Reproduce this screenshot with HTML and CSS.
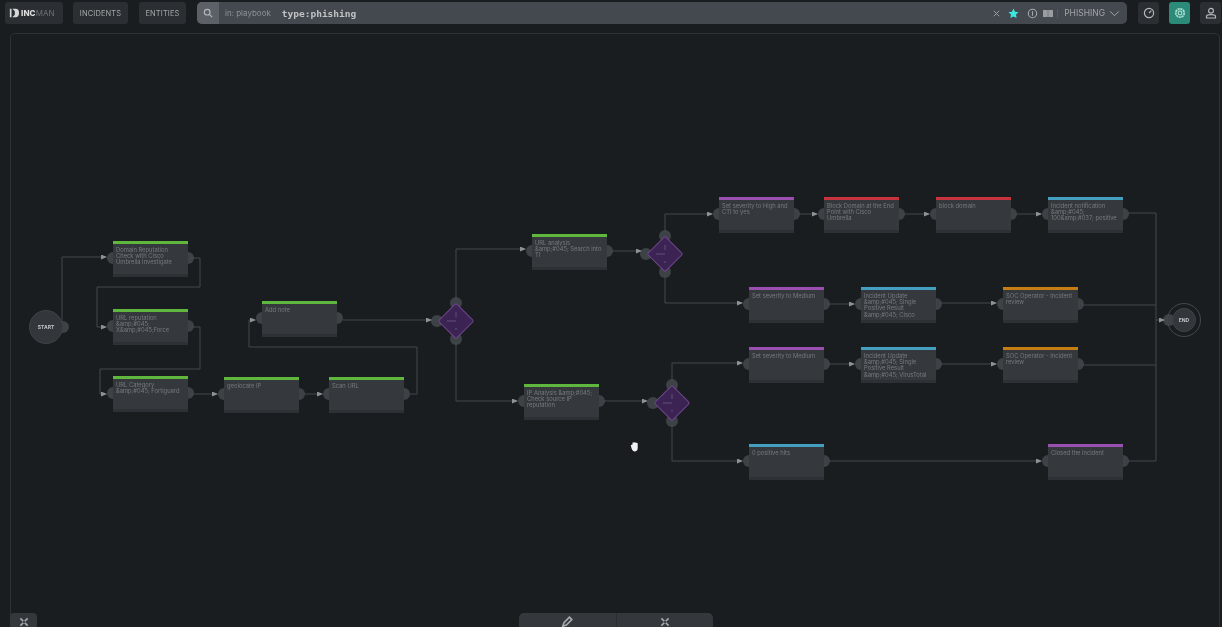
FILE: index.html
```html
<!DOCTYPE html>
<html lang="en">
<head>
<meta charset="utf-8">
<title>IncMan playbook</title>
<link rel="stylesheet" href="styles.css">
</head>
<body>
<header class="topbar">
  <div class="btn logo">
    <svg class="logo-mark" viewBox="0 0 12 12"><path d="M1 1h2v10H1zM4 1h4a4 5 0 0 1 0 10H4l3-3V4z"/></svg>
    <span class="logo-inc">INC</span><span class="logo-man">MAN</span>
  </div>
  <div class="btn nav-incidents">INCIDENTS</div>
  <div class="btn nav-entities">ENTITIES</div>
  <div class="search">
    <div class="search-icon"><svg viewBox="0 0 12 12"><circle cx="5" cy="5" r="3.4"/><path d="M7.6 7.6 11 11"/></svg></div>
    <span class="search-scope">in: playbook</span>
    <span class="search-query">type:phishing</span>
    <span class="spring"></span>
    <svg class="sicon close" viewBox="0 0 10 10"><path d="M2 2l6 6M8 2l-6 6"/></svg>
    <svg class="star" viewBox="0 0 12 12"><path d="M6 .6l1.700 3.500 3.800.5-2.800 2.600.7 3.800L6 9.200l-3.400 1.800.7-3.800L.5 4.600l3.800-.5z"/></svg>
    <svg class="sicon info" viewBox="0 0 10 10"><circle cx="5" cy="5" r="3.800"/><path d="M5 3v4"/></svg>
    <svg class="book" viewBox="0 0 10 9"><path d="M0 1h4.800v7H0zM5.200 1H10v7H5.200z"/></svg>
    <span class="sep"></span>
    <span class="search-type">PHISHING</span>
    <svg class="sicon chev" viewBox="0 0 12 8"><path d="M1 1.500l5 5 5-5"/></svg>
  </div>
  <div class="btn sq first"><svg class="round-ico" viewBox="0 0 12 12"><circle cx="6" cy="6" r="4.600"/><path d="M6 6l2.400-2.400"/></svg></div>
  <div class="btn sq green"><svg class="round-ico" viewBox="0 0 12 12"><circle cx="6" cy="6" r="4.200" stroke-dasharray="2.200 .6" stroke-width="1.800"/><circle cx="6" cy="6" r="1.800"/></svg></div>
  <div class="btn sq user"><svg class="round-ico" viewBox="0 0 12 12"><circle cx="6" cy="3.800" r="2.400"/><path d="M1.500 11V9.400c0-1.200 1.800-1.700 4.500-1.700s4.500.5 4.500 1.700V11z"/></svg></div>
</header>

<main class="canvas">
  <svg class="edges" viewBox="0 0 1222 627" width="1222" height="627">
    <defs>
      <marker id="arrow" markerWidth="6" markerHeight="5" refX="5" refY="2.500" orient="auto" markerUnits="userSpaceOnUse">
        <path class="arrowhead" d="M0 0L6 2.500L0 5z"/>
      </marker>
    </defs>
    <g class="edge">
      <path marker-end="url(#arrow)" d="M62 322V257H106"/>
      <path marker-end="url(#arrow)" d="M190 258H200V287H97V327H106"/>
      <path marker-end="url(#arrow)" d="M190 327H200V369H100V394H106"/>
      <path marker-end="url(#arrow)" d="M190 394H217"/>
      <path marker-end="url(#arrow)" d="M304 394H322"/>
      <path marker-end="url(#arrow)" d="M410 394H417V347H249V320H255"/>
      <path marker-end="url(#arrow)" d="M343 320H431"/>
      <path marker-end="url(#arrow)" d="M456 300V249H525"/>
      <path marker-end="url(#arrow)" d="M456 342V401H517"/>
      <path marker-end="url(#arrow)" d="M611 251H641"/>
      <path marker-end="url(#arrow)" d="M665 232V214H712"/>
      <path marker-end="url(#arrow)" d="M665 275V303H742"/>
      <path marker-end="url(#arrow)" d="M798 214H817"/>
      <path marker-end="url(#arrow)" d="M903 214H929"/>
      <path marker-end="url(#arrow)" d="M1015 214H1041"/>
      <path d="M1128 213H1156V461H1128"/>
      <path marker-end="url(#arrow)" d="M1156 320H1164"/>
      <path marker-end="url(#arrow)" d="M828 304H854"/>
      <path marker-end="url(#arrow)" d="M940 303H996"/>
      <path d="M1082 305H1156"/>
      <path marker-end="url(#arrow)" d="M828 364H854"/>
      <path marker-end="url(#arrow)" d="M940 364H996"/>
      <path d="M1082 365H1156"/>
      <path marker-end="url(#arrow)" d="M603 401H647"/>
      <path marker-end="url(#arrow)" d="M672 382V363H742"/>
      <path marker-end="url(#arrow)" d="M672 424V461H742"/>
      <path marker-end="url(#arrow)" d="M828 461H1041"/>
    </g>
  </svg>

  <div class="terminal start"><i class="port right"></i><b class="disc">START</b></div>
  <div class="terminal end"><i class="port left"></i><b class="disc">END</b></div>

  <div class="node green-top n1"><i class="port left"></i><i class="port right"></i><p>Domain Reputation Check with Cisco Umbrella Investigate</p></div>
  <div class="node green-top n2"><i class="port left"></i><i class="port right"></i><p>URL reputation &amp;amp;#045; X&amp;amp;#045;Force</p></div>
  <div class="node green-top n3"><i class="port left"></i><i class="port right"></i><p>URL Category &amp;amp;#045; Fortiguard</p></div>
  <div class="node green-top n4"><i class="port left"></i><i class="port right"></i><p>geoIocate IP</p></div>
  <div class="node green-top n5"><i class="port left"></i><i class="port right"></i><p>Scan URL</p></div>
  <div class="node green-top n6"><i class="port left"></i><i class="port right"></i><p>Add note</p></div>
  <div class="node green-top n7"><i class="port left"></i><i class="port right"></i><p>URL analysis &amp;amp;#045; Search into TI</p></div>
  <div class="node green-top n8"><i class="port left"></i><i class="port right"></i><p>IP Analysis &amp;amp;#045; Check source IP reputation</p></div>
  <div class="node purple-top n9"><i class="port left"></i><i class="port right"></i><p>Set severity to High and CTI to yes</p></div>
  <div class="node red-top n10"><i class="port left"></i><i class="port right"></i><p>Block Domain at the End Point with Cisco Umbrella</p></div>
  <div class="node red-top n11"><i class="port left"></i><i class="port right"></i><p>block domain</p></div>
  <div class="node blue-top n12"><i class="port left"></i><i class="port right"></i><p>Incident notification &amp;amp;#045; 100&amp;amp;#037; positive</p></div>
  <div class="node purple-top n13"><i class="port left"></i><i class="port right"></i><p>Set severity to Medium</p></div>
  <div class="node blue-top n14"><i class="port left"></i><i class="port right"></i><p>Incident Update &amp;amp;#045; Single Positive Result &amp;amp;#045; Cisco</p></div>
  <div class="node orange-top n15"><i class="port left"></i><i class="port right"></i><p>SOC Operator - Incident review</p></div>
  <div class="node purple-top n16"><i class="port left"></i><i class="port right"></i><p>Set severity to Medium</p></div>
  <div class="node blue-top n17"><i class="port left"></i><i class="port right"></i><p>Incident Update &amp;amp;#045; Single Positive Result &amp;amp;#045; VirusTotal</p></div>
  <div class="node orange-top n18"><i class="port left"></i><i class="port right"></i><p>SOC Operator - Incident review</p></div>
  <div class="node blue-top n19"><i class="port left"></i><i class="port right"></i><p>0 positive hits</p></div>
  <div class="node purple-top n20"><i class="port left"></i><i class="port right"></i><p>Closed the incident</p></div>

  <div class="gateway g1"><i class="port gleft"></i><i class="port gtop"></i><i class="port gbottom"></i><span class="diamond"></span><svg class="gmark" viewBox="0 0 38 38"><path d="M10 19H19M19 10V15M19 26V28"/></svg></div>
  <div class="gateway g2"><i class="port gleft"></i><i class="port gtop"></i><i class="port gbottom"></i><span class="diamond"></span><svg class="gmark" viewBox="0 0 38 38"><path d="M10 19H19M19 10V15M19 26V28"/></svg></div>
  <div class="gateway g3"><i class="port gleft"></i><i class="port gtop"></i><i class="port gbottom"></i><span class="diamond"></span><svg class="gmark" viewBox="0 0 38 38"><path d="M10 19H19M19 10V15M19 26V28"/></svg></div>

  <svg class="hand" viewBox="0 0 12 12"><path d="M2 5c0-1 1-1 1.400-.4L4 2c.2-.8 1.200-.7 1.300 0 .2-.9 1.300-.9 1.500 0 .3-.7 1.300-.5 1.300.3.400-.5 1.400-.3 1.400.6V8c0 2-1.200 3.500-3.500 3.500C4 11.500 3 9.500 2 5z"/></svg>

  <div class="tool tool-left"><svg viewBox="0 0 10 10"><path d="M2 2l2.400 2.400M8 2L5.600 4.400M2 8l2.400-2.400M8 8L5.600 5.600"/></svg></div>
  <div class="toolbar">
    <div class="tool-cell"><svg viewBox="0 0 10 10"><path d="M1.500 8.500l1-3L7 1l2 2-4.500 4.500z"/></svg></div>
    <div class="tool-cell"><svg viewBox="0 0 10 10"><path d="M2 2l2.400 2.400M8 2L5.600 4.400M2 8l2.400-2.400M8 8L5.600 5.600"/></svg></div>
  </div>
</main>
</body>
</html>
```
FILE: styles.css
```css
* { box-sizing: border-box; }
html, body { margin: 0; height: 100%; }
body {
  width: 1222px;
  height: 627px;
  overflow: hidden;
  background: #191d20;
  font-family: "Inter", "Liberation Sans", sans-serif;
  color: #8d9093;
  position: relative;
}

/* top bar */
.topbar {
  display: flex;
  align-items: center;
  height: 22px;
  margin-top: 2px;
  padding-left: 5px;
  filter: blur(.6px);
}
.btn {
  height: 22px;
  display: flex;
  align-items: center;
  justify-content: center;
  background: #2b2f33;
  border-radius: 3px;
  font-size: 7.500px;
  letter-spacing: .1px;
  color: #a4a7a9;
}
.logo { width: 58px; justify-content: flex-start; padding-left: 4px; }
.logo-mark { width: 10px; height: 10px; fill: #d5d7d8; margin-right: 2px; }
.logo-inc { font-weight: 800; font-size: 8px; color: #dcdedf; }
.logo-man { font-size: 8px; color: #6d7175; }
.nav-incidents { width: 55px; margin-left: 10px; }
.nav-entities { width: 47px; margin-left: 11px; }
.search {
  width: 930px;
  height: 22px;
  margin-left: 11px;
  display: flex;
  align-items: center;
  background: #44494f;
  border-radius: 5px;
  overflow: hidden;
}
.search-icon {
  width: 22px;
  height: 22px;
  background: #5b6167;
  display: flex;
  align-items: center;
  justify-content: center;
}
.search-icon svg { width: 10px; height: 10px; fill: none; stroke: #b5b8ba; stroke-width: 1.400; }
.search-scope { font-size: 8px; color: #8f9396; margin-left: 6px; }
.search-query {
  font-family: "DejaVu Sans Mono", "Liberation Mono", monospace;
  font-size: 9.500px;
  font-weight: 700;
  color: #c0c2c4;
  margin-left: 11px;
}
.spring { flex: 1; }
.sicon { fill: none; stroke: #a6a9ac; stroke-width: 1; }
.close { width: 9px; height: 9px; margin-right: 7px; }
.star { width: 11px; height: 11px; fill: #3be8e0; margin-right: 8px; }
.info { width: 11px; height: 11px; margin-right: 5px; }
.book { width: 10px; height: 9px; fill: #999da0; margin-right: 4px; }
.sep { width: 1px; height: 9px; background: #555a60; margin-right: 6px; }
.search-type { font-size: 8.500px; color: #a2a5a8; margin-right: 4px; }
.chev { width: 11px; height: 7px; margin-right: 7px; stroke-width: 1.100; }
.sq { width: 21px; }
.first { margin-left: 11px; }
.green { margin-left: 10px; background: #2b8a78; }
.user { margin-left: 10px; }
.round-ico { width: 12px; height: 12px; fill: none; stroke: #b5b8ba; stroke-width: 1.200; }
.green .round-ico { stroke: #a8dcd2; }

/* canvas */
.canvas {
  position: absolute;
  left: 10px;
  top: 33px;
  width: 1210px;
  height: 610px;
  border: 1px solid #2f3337;
  border-radius: 5px;
  filter: blur(.6px);
}
.edges { position: absolute; left: -11px; top: -34px; }
.edge path { fill: none; stroke: #44484c; stroke-width: 1; }
.arrowhead { fill: #8f9295; stroke: none; }

.node {
  position: absolute;
  width: 75px;
  height: 36px;
  background: #35383d;
  border-top: 3px solid #666;
  border-bottom: 3px solid #2d3034;
}
.node p {
  margin: 0;
  padding: 3px 5px 0 3px;
  font-size: 5.800px;
  line-height: 6.200px;
  color: #777b7e;
}
.port {
  position: absolute;
  z-index: -1;
  width: 12px;
  height: 12px;
  border-radius: 50%;
  background: #3d4246;
}
.node .left { left: -6px; top: 8px; }
.node .right { right: -6px; top: 8px; }

.green-top { border-top-color: #5fb83d; }
.purple-top { border-top-color: #9b4fb0; }
.red-top { border-top-color: #c7323f; }
.blue-top { border-top-color: #44a0c0; }
.orange-top { border-top-color: #c67d12; }

.n1 { left: 102px; top: 207px; }
.n2 { left: 102px; top: 275px; }
.n3 { left: 102px; top: 342px; }
.n4 { left: 213px; top: 343px; }
.n5 { left: 318px; top: 343px; }
.n6 { left: 251px; top: 267px; }
.n7 { left: 521px; top: 200px; }
.n8 { left: 513px; top: 350px; }
.n9 { left: 708px; top: 163px; }
.n10 { left: 813px; top: 163px; }
.n11 { left: 925px; top: 163px; }
.n12 { left: 1037px; top: 163px; }
.n13 { left: 738px; top: 253px; }
.n14 { left: 850px; top: 253px; }
.n15 { left: 992px; top: 253px; }
.n16 { left: 738px; top: 313px; }
.n17 { left: 850px; top: 313px; }
.n18 { left: 992px; top: 313px; }
.n19 { left: 738px; top: 410px; }
.n20 { left: 1037px; top: 410px; }

.terminal {
  position: absolute;
  width: 34px;
  height: 34px;
  display: flex;
  align-items: center;
  justify-content: center;
}
.start { left: 18px; top: 276px; }
.end {
  left: 1156px;
  top: 269px;
  border: 1px solid #45494d;
  border-radius: 50%;
}
.disc {
  position: relative;
  width: 34px;
  height: 34px;
  border-radius: 50%;
  background: #33373b;
  border: 1px solid #3f4347;
  display: flex;
  align-items: center;
  justify-content: center;
  font-size: 5px;
  font-weight: 700;
  color: #c3c5c7;
}
.end .disc { width: 24px; height: 24px; }
.terminal .right { left: 28px; top: 11px; }
.terminal .left { left: -5px; top: 10px; }

.gateway { position: absolute; width: 38px; height: 38px; }
.g1 { left: 426px; top: 268px; }
.g2 { left: 635px; top: 201px; }
.g3 { left: 642px; top: 350px; }
.gleft { left: -6px; top: 13px; }
.gtop { left: 13px; top: -5px; }
.gbottom { left: 13px; bottom: -5px; }
.diamond {
  position: absolute;
  left: 6px;
  top: 6px;
  width: 26px;
  height: 26px;
  background: #3b2354;
  border: 1px solid #70448a;
  border-radius: 2px;
  transform: rotate(45deg);
}
.gmark { position: absolute; inset: 0; fill: none; stroke: #77658b; stroke-width: .7; }

.hand {
  position: absolute;
  left: 618px;
  top: 407px;
  width: 11px;
  height: 11px;
  fill: #f2f2f2;
}

.tool {
  position: absolute;
  left: -1px;
  top: 579px;
  width: 27px;
  height: 30px;
  background: #34383c;
  border-radius: 4px 4px 0 0;
  display: flex;
  justify-content: center;
  padding-top: 3px;
}
.toolbar {
  position: absolute;
  left: 508px;
  top: 579px;
  width: 194px;
  height: 30px;
  display: flex;
  background: #34383c;
  border-radius: 5px 5px 0 0;
}
.tool-cell {
  flex: 1;
  display: flex;
  justify-content: center;
  padding-top: 3px;
}
.tool-cell + .tool-cell { border-left: 1px solid #2a2e31; }
.tool svg, .tool-cell svg { width: 12px; height: 12px; fill: none; stroke: #a8abad; stroke-width: 1.400; }
```
